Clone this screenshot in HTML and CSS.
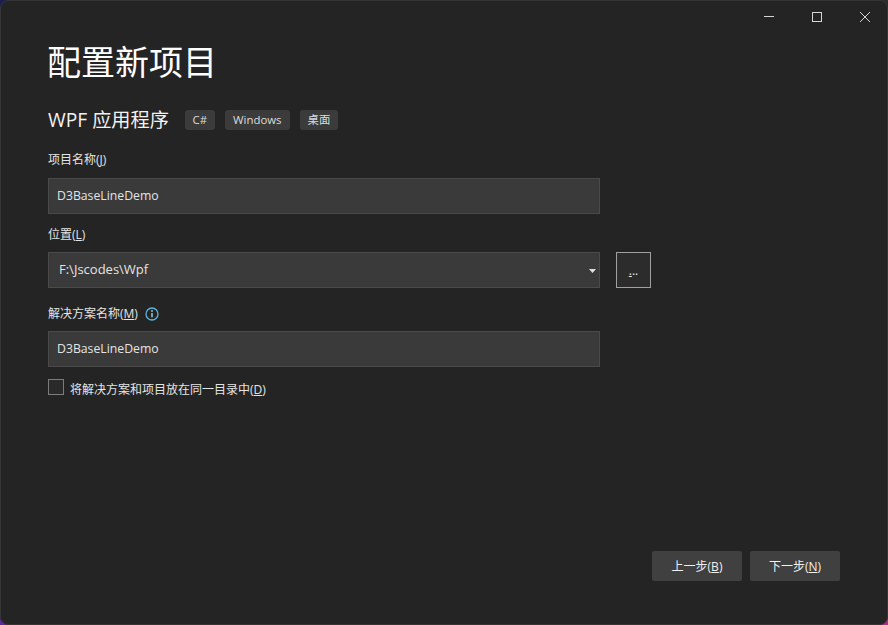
FILE: index.html
```html
<!DOCTYPE html>
<html lang="zh-CN">
<head>
<meta charset="utf-8">
<title>配置新项目</title>
<link rel="stylesheet" href="styles.css">
</head>
<body>
<div class="window">
  <div class="titlebar">
    <svg class="win-icon" width="12" height="12" viewBox="0 0 12 12"><path d="M1 5.5H11" stroke="#d6d6d6" fill="none"/></svg>
    <svg class="win-icon" width="12" height="12" viewBox="0 0 12 12"><rect x="1.5" y="1.5" width="9" height="9" stroke="#d6d6d6" fill="none"/></svg>
    <svg class="win-icon" width="12" height="12" viewBox="0 0 12 12"><path d="M1 1L11 11M11 1L1 11" stroke="#d6d6d6" fill="none"/></svg>
  </div>
  <main class="content">
    <h1 class="title">配置新项目</h1>
    <div class="subtitle-row">
      <h2 class="subtitle">WPF 应用程序</h2>
      <div class="tags">
        <span class="tag">C#</span>
        <span class="tag">Windows</span>
        <span class="tag">桌面</span>
      </div>
    </div>
    <label class="label label-name">项目名称(<u>J</u>)</label>
    <div class="input">D3BaseLineDemo</div>
    <label class="label label-loc">位置(<u>L</u>)</label>
    <div class="loc-row">
      <div class="input input-select">
        <span class="select-value">F:\Jscodes\Wpf</span>
        <svg class="caret" width="7" height="4" viewBox="0 0 7 4"><path d="M0 0H7L3.5 4Z" fill="#e0e0e0"/></svg>
      </div>
      <button class="browse"><u>.</u>..</button>
    </div>
    <div class="label label-sol">
      <span>解决方案名称(<u>M</u>)</span>
      <svg class="info" width="14" height="14" viewBox="0 0 14 14"><circle cx="7" cy="7" r="6" stroke="#5fb4dc" stroke-width="1.3" fill="none"/><path d="M7 6V10.3" stroke="#8fd0ee" stroke-width="1.5"/><circle cx="7" cy="4" r="0.9" fill="#8fd0ee"/></svg>
    </div>
    <div class="input input-sol">D3BaseLineDemo</div>
    <div class="check-row">
      <span class="checkbox"></span>
      <span class="check-text">将解决方案和项目放在同一目录中(<u>D</u>)</span>
    </div>
  </main>
  <footer class="footer">
    <button class="btn">上一步(<u>B</u>)</button>
    <button class="btn">下一步(<u>N</u>)</button>
  </footer>
</div>
</body>
</html>
```
FILE: styles.css
```css
* { box-sizing: border-box; }
html, body { margin: 0; height: 100%; }
body {
  font-family: "Noto Sans CJK SC", "Open Sans", sans-serif; color: #e4e4e4; overflow: hidden;
  background:
    radial-gradient(circle at 0 0, #1c1c50 10px, transparent 10px),
    radial-gradient(circle at 0 100%, #5a2a9a 10px, transparent 10px),
    radial-gradient(circle at 100% 100%, #b02a90 10px, transparent 10px),
    #2c2c2c;
}
.window {
  width: 888px; height: 625px; background: #242424; border: 1px solid #353535; border-radius: 8px;
  display: flex; flex-direction: column; overflow: hidden;
}
.titlebar { display: flex; justify-content: flex-end; gap: 36px; padding: 10px 16px 0 0; height: 35px; }
.win-icon { display: block; }
.content { flex: 1; padding: 0 0 0 47px; display: flex; flex-direction: column; align-items: flex-start; }
.title { margin: 0 0 0 -1px; font-size: 34px; line-height: 50px; font-weight: 400; color: #fff; }
.subtitle-row { display: flex; align-items: center; margin-top: 22px; height: 24px; }
.subtitle { margin: 0; font-size: 19.2px; line-height: 24px; font-weight: 400; color: #f2f2f2; font-family: "Open Sans", "Noto Sans CJK SC", sans-serif; }
.tags { display: flex; gap: 10px; margin-left: 15.6px; }
.tag { background: #3b3b3b; border-radius: 3px; height: 20px; padding: 0 8px; font-size: 11.4px; line-height: 19px; color: #dcdcdc; font-family: "Open Sans", "Noto Sans CJK SC", sans-serif; }
.label { font-size: 12px; line-height: 18px; color: #e4e4e4; font-family: "Open Sans", "Noto Sans CJK SC", sans-serif; }
.label-name { margin-top: 19px; }
.label-loc { margin-top: 12px; }
.label-sol { margin-top: 17px; display: flex; align-items: center; gap: 7px; }
.input {
  width: 552px; height: 36px; margin-top: 9px; padding: 0 8px; background: #3a3a3a; border: 1px solid #4a4a4a;
  font-family: "Open Sans", sans-serif; font-size: 12.25px; line-height: 34px; color: #e4e4e4;
}
.input-sol { margin-top: 8px; }
.loc-row { display: flex; align-items: center; gap: 16px; margin-top: 8px; }
.input-select { margin-top: 0; display: flex; justify-content: space-between; align-items: center; padding: 0 3px 0 10px; font-size: 13px; }
.select-value { line-height: 32px; margin-bottom: 2px; }
.caret { margin-top: 1px; }
.browse { width: 35px; height: 36px; padding: 0; background: #2c2c2c; border: 1px solid #a0a0a0; color: #e4e4e4; font-size: 12px; font-family: "Open Sans", sans-serif; }
.check-row { display: flex; align-items: center; gap: 6px; margin-top: 14px; height: 18px; }
.checkbox { width: 16px; height: 16px; margin-bottom: 6px; border: 1px solid #7c7c7c; background: #2a2a2a; }
.check-text { font-size: 12px; line-height: 18px; font-family: "Open Sans", "Noto Sans CJK SC", sans-serif; }
.footer { display: flex; justify-content: flex-end; gap: 8px; padding: 0 47px 43px 0; }
.btn { width: 90px; height: 30px; padding: 0; background: #404040; border: 0; border-radius: 2px; color: #f0f0f0; font-size: 12px; font-family: "Open Sans", "Noto Sans CJK SC", sans-serif; }
```
